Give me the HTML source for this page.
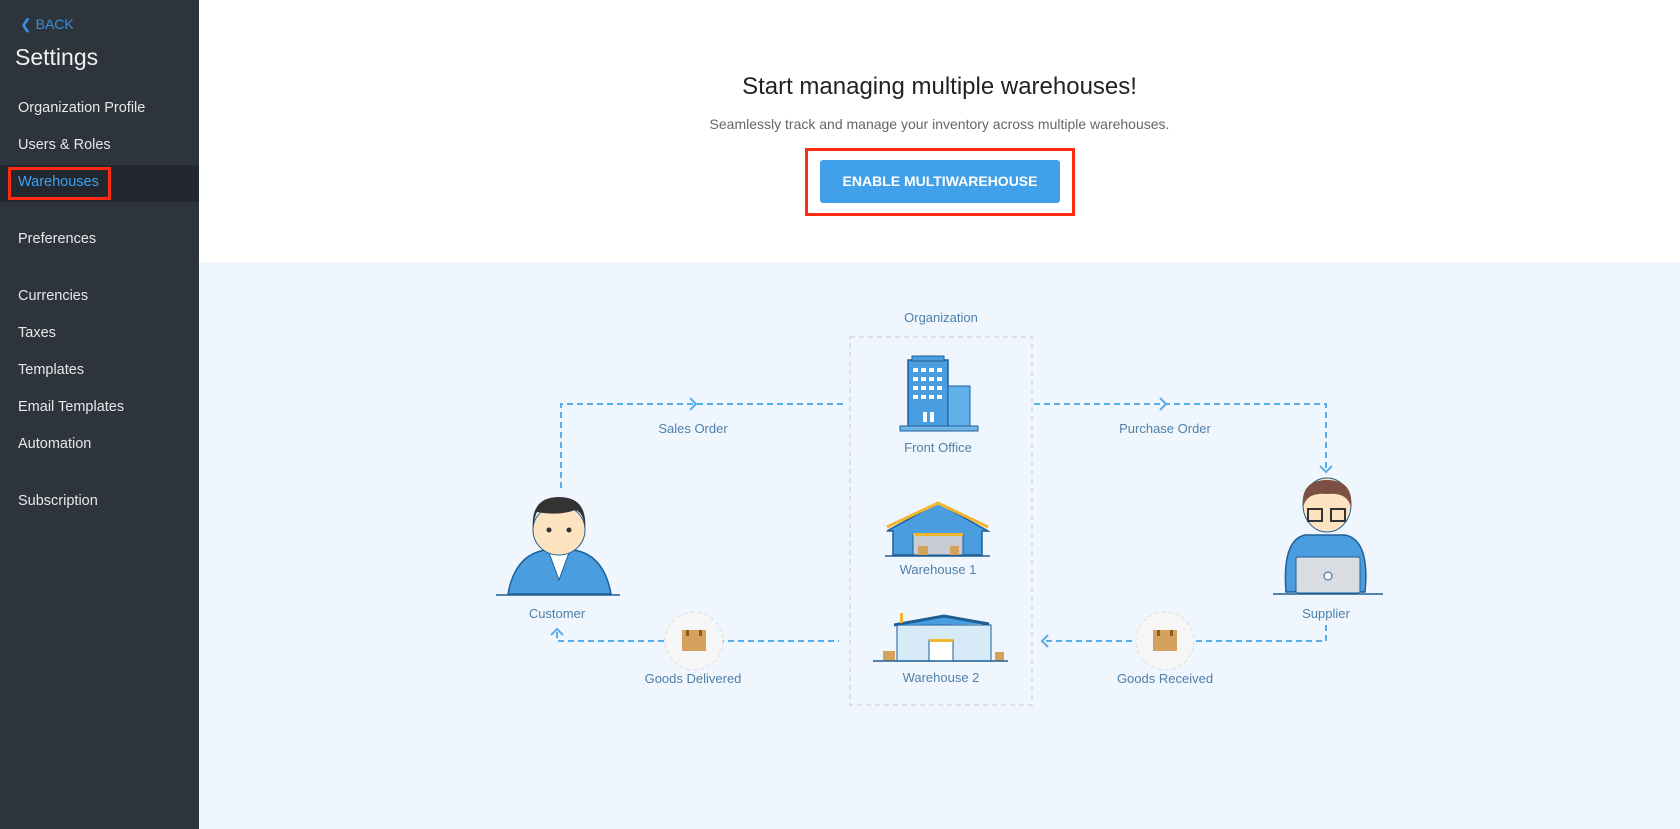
<!DOCTYPE html>
<html><head><meta charset="utf-8"><style>
*{margin:0;padding:0;box-sizing:border-box}
body{width:1680px;height:829px;overflow:hidden;font-family:"Liberation Sans",sans-serif;background:#fff;position:relative}
.sb{position:absolute;left:0;top:0;width:199px;height:829px;background:#2e343b}
.sb div{position:absolute;left:18px;color:#e6e8ea;font-size:14.5px}
.main{position:absolute;left:199px;top:0;width:1481px;height:829px}
.top{position:absolute;left:0;top:0;width:1481px;height:262px;background:#fff}
.bot{position:absolute;left:0;top:262px;width:1481px;height:567px;background:#eff6fd}
</style></head><body>
<div class="sb">
 <div style="left:20px;top:16px;color:#3b8fe0;font-size:14px">&#10094; BACK</div>
 <div style="left:15px;top:44px;font-size:23px;color:#f0f0f0">Settings</div>
 <div style="top:100px">Organization Profile</div>
 <div style="top:137px">Users &amp; Roles</div>
 <div style="left:0;top:165px;width:199px;height:37px;background:#23282e"></div>
 <div style="left:8px;top:167px;width:103px;height:33px;border:3px solid #ff2a12"></div>
 <div style="top:174px;color:#3ea0f0">Warehouses</div>
 <div style="top:231px">Preferences</div>
 <div style="top:288px">Currencies</div>
 <div style="top:325px">Taxes</div>
 <div style="top:362px">Templates</div>
 <div style="top:399px">Email Templates</div>
 <div style="top:436px">Automation</div>
 <div style="top:493px">Subscription</div>
</div>
<div class="main">
 <div class="top">
  <div style="position:absolute;left:0;width:1481px;top:73px;text-align:center;font-size:24px;color:#222">Start managing multiple warehouses!</div>
  <div style="position:absolute;left:0;width:1481px;top:116px;text-align:center;font-size:14px;color:#666">Seamlessly track and manage your inventory across multiple warehouses.</div>
  <div style="position:absolute;left:606px;top:148px;width:270px;height:68px;border:3px solid #ff2a12"></div>
  <div style="position:absolute;left:621px;top:160px;width:240px;height:43px;background:#40a0ea;border-radius:3px;color:#fff;font-weight:bold;font-size:14px;text-align:center;line-height:43px">ENABLE MULTIWAREHOUSE</div>
 </div>
 <div class="bot"></div>
</div>
<svg style="position:absolute;left:0;top:0" width="1680" height="829" font-family="Liberation Sans, sans-serif" font-size="13" fill="#4f7fa8">
 <g fill="none" stroke="#5aaee8" stroke-width="2" stroke-dasharray="6,4">
  <path d="M561 488 V404 H846"/><path d="M1034 404 H1326 V472"/>
  <path d="M557 632 V641 H839"/><path d="M1326 625 V641 H1042"/>
 </g>
 <g fill="none" stroke="#5aaee8" stroke-width="2">
  <path d="M690 398 L696 404 L690 410"/><path d="M1160 398 L1166 404 L1160 410"/>
  <path d="M1320 466 L1326 472 L1332 466"/><path d="M551 635 L557 629 L563 635"/>
  <path d="M1048 635 L1042 641 L1048 647"/>
 </g>
 <rect x="850" y="337" width="182" height="368" fill="none" stroke="#d4d8dc" stroke-width="1.5" stroke-dasharray="5,4"/>
 <text x="941" y="322" text-anchor="middle">Organization</text>
 <text x="693" y="433" text-anchor="middle">Sales Order</text>
 <text x="1165" y="433" text-anchor="middle">Purchase Order</text>
 <text x="938" y="452" text-anchor="middle">Front Office</text>
 <text x="938" y="574" text-anchor="middle">Warehouse 1</text>
 <text x="941" y="682" text-anchor="middle">Warehouse 2</text>
 <text x="557" y="618" text-anchor="middle">Customer</text>
 <text x="1326" y="618" text-anchor="middle">Supplier</text>
 <text x="693" y="683" text-anchor="middle">Goods Delivered</text>
 <text x="1165" y="683" text-anchor="middle">Goods Received</text>
 <!-- circles -->
 <circle cx="694" cy="641" r="29" fill="#f6f6f6" stroke="#ddd" stroke-dasharray="4,3"/>
 <rect x="682" y="630" width="24" height="21" fill="#d4a25c"/><rect x="686" y="630" width="3" height="6" fill="#8a5a20"/><rect x="699" y="630" width="3" height="6" fill="#8a5a20"/>
 <circle cx="1165" cy="641" r="29" fill="#f6f6f6" stroke="#ddd" stroke-dasharray="4,3"/>
 <rect x="1153" y="630" width="24" height="21" fill="#d4a25c"/><rect x="1157" y="630" width="3" height="6" fill="#8a5a20"/><rect x="1170" y="630" width="3" height="6" fill="#8a5a20"/>
 <!-- front office -->
 <rect x="908" y="360" width="40" height="67" fill="#4a9ee0" stroke="#1e5f95" stroke-width="1.5"/>
 <rect x="912" y="356" width="32" height="5" fill="#4a9ee0" stroke="#1e5f95"/>
 <rect x="948" y="386" width="22" height="41" fill="#62b0ea" stroke="#1e5f95"/>
 <g fill="#fff"><rect x="913" y="368" width="5" height="4"/><rect x="921" y="368" width="5" height="4"/><rect x="929" y="368" width="5" height="4"/><rect x="937" y="368" width="5" height="4"/>
 <rect x="913" y="377" width="5" height="4"/><rect x="921" y="377" width="5" height="4"/><rect x="929" y="377" width="5" height="4"/><rect x="937" y="377" width="5" height="4"/>
 <rect x="913" y="386" width="5" height="4"/><rect x="921" y="386" width="5" height="4"/><rect x="929" y="386" width="5" height="4"/><rect x="937" y="386" width="5" height="4"/>
 <rect x="913" y="395" width="5" height="4"/><rect x="921" y="395" width="5" height="4"/><rect x="929" y="395" width="5" height="4"/><rect x="937" y="395" width="5" height="4"/>
 <rect x="923" y="412" width="4" height="10"/><rect x="930" y="412" width="4" height="10"/></g>
 <rect x="900" y="426" width="78" height="5" fill="#6fb5e8" stroke="#1e5f95"/>
 <!-- warehouse 1 -->
 <path d="M887 531 L938 503 L988 531 L982 531 L982 555 L893 555 L893 531 Z" fill="#4a9ee0" stroke="#1e5f95" stroke-width="1.5"/>
 <path d="M887 527 L938 503 L988 527" fill="none" stroke="#f2b630" stroke-width="3"/>
 <rect x="913" y="534" width="50" height="21" fill="#c8ccd2" stroke="#1e5f95"/>
 <rect x="913" y="533" width="50" height="3" fill="#f2b630"/>
 <rect x="918" y="546" width="10" height="9" fill="#d4a25c"/><rect x="950" y="546" width="9" height="9" fill="#d4a25c"/>
 <line x1="885" y1="556" x2="990" y2="556" stroke="#1e5f95" stroke-width="1.5"/>
 <!-- warehouse 2 -->
 <rect x="897" y="625" width="94" height="36" fill="#d6eaf8" stroke="#1e5f95"/>
 <path d="M894 625 L944 616 L989 624" fill="#4a9ee0" stroke="#1e5f95" stroke-width="3"/>
 <rect x="900" y="613" width="3" height="10" fill="#f2b630"/>
 <rect x="929" y="640" width="24" height="21" fill="#fff" stroke="#1e5f95"/><rect x="929" y="639" width="24" height="3" fill="#f2b630"/>
 <rect x="883" y="651" width="12" height="10" fill="#d4a25c"/><rect x="995" y="652" width="9" height="9" fill="#d4a25c"/>
 <line x1="873" y1="661" x2="1008" y2="661" stroke="#1e5f95" stroke-width="1.5"/>
 <!-- customer -->
 <path d="M508 594 Q515 555 545 550 L574 550 Q604 555 611 594 Z" fill="#4a9ee0" stroke="#1e5f95" stroke-width="1.5"/>
 <path d="M548 550 L559 580 L570 550 Z" fill="#fff" stroke="#1e5f95"/>
 <ellipse cx="559" cy="530" rx="26" ry="25" fill="#fde3c0" stroke="#1e5f95"/>
 <path d="M533 530 Q530 497 559 497 Q588 497 585 530 Q584 512 575 510 Q560 516 537 512 Q534 518 533 530 Z" fill="#333"/>
 <circle cx="549" cy="530" r="2.5" fill="#333"/><circle cx="569" cy="530" r="2.5" fill="#333"/>
 <line x1="496" y1="595" x2="620" y2="595" stroke="#1e5f95" stroke-width="1.5"/>
 <!-- supplier -->
 <path d="M1286 592 Q1282 540 1305 535 L1345 535 Q1370 540 1365 592 Z" fill="#4a9ee0" stroke="#1e5f95" stroke-width="1.5"/>
 <ellipse cx="1327" cy="505" rx="24" ry="27" fill="#fde3c0" stroke="#1e5f95"/>
 <path d="M1303 508 Q1300 480 1327 480 Q1354 480 1351 508 Q1348 492 1327 494 Q1306 492 1303 508 Z" fill="#7c5045"/>
 <rect x="1308" y="509" width="14" height="12" fill="none" stroke="#333" stroke-width="2"/><rect x="1331" y="509" width="14" height="12" fill="none" stroke="#333" stroke-width="2"/>
 <rect x="1296" y="557" width="64" height="36" rx="2" fill="#d9dde2" stroke="#1e5f95"/>
 <circle cx="1328" cy="576" r="4" fill="#fff" stroke="#1e5f95"/>
 <line x1="1273" y1="594" x2="1383" y2="594" stroke="#1e5f95" stroke-width="1.5"/>
</svg>
</body></html>
